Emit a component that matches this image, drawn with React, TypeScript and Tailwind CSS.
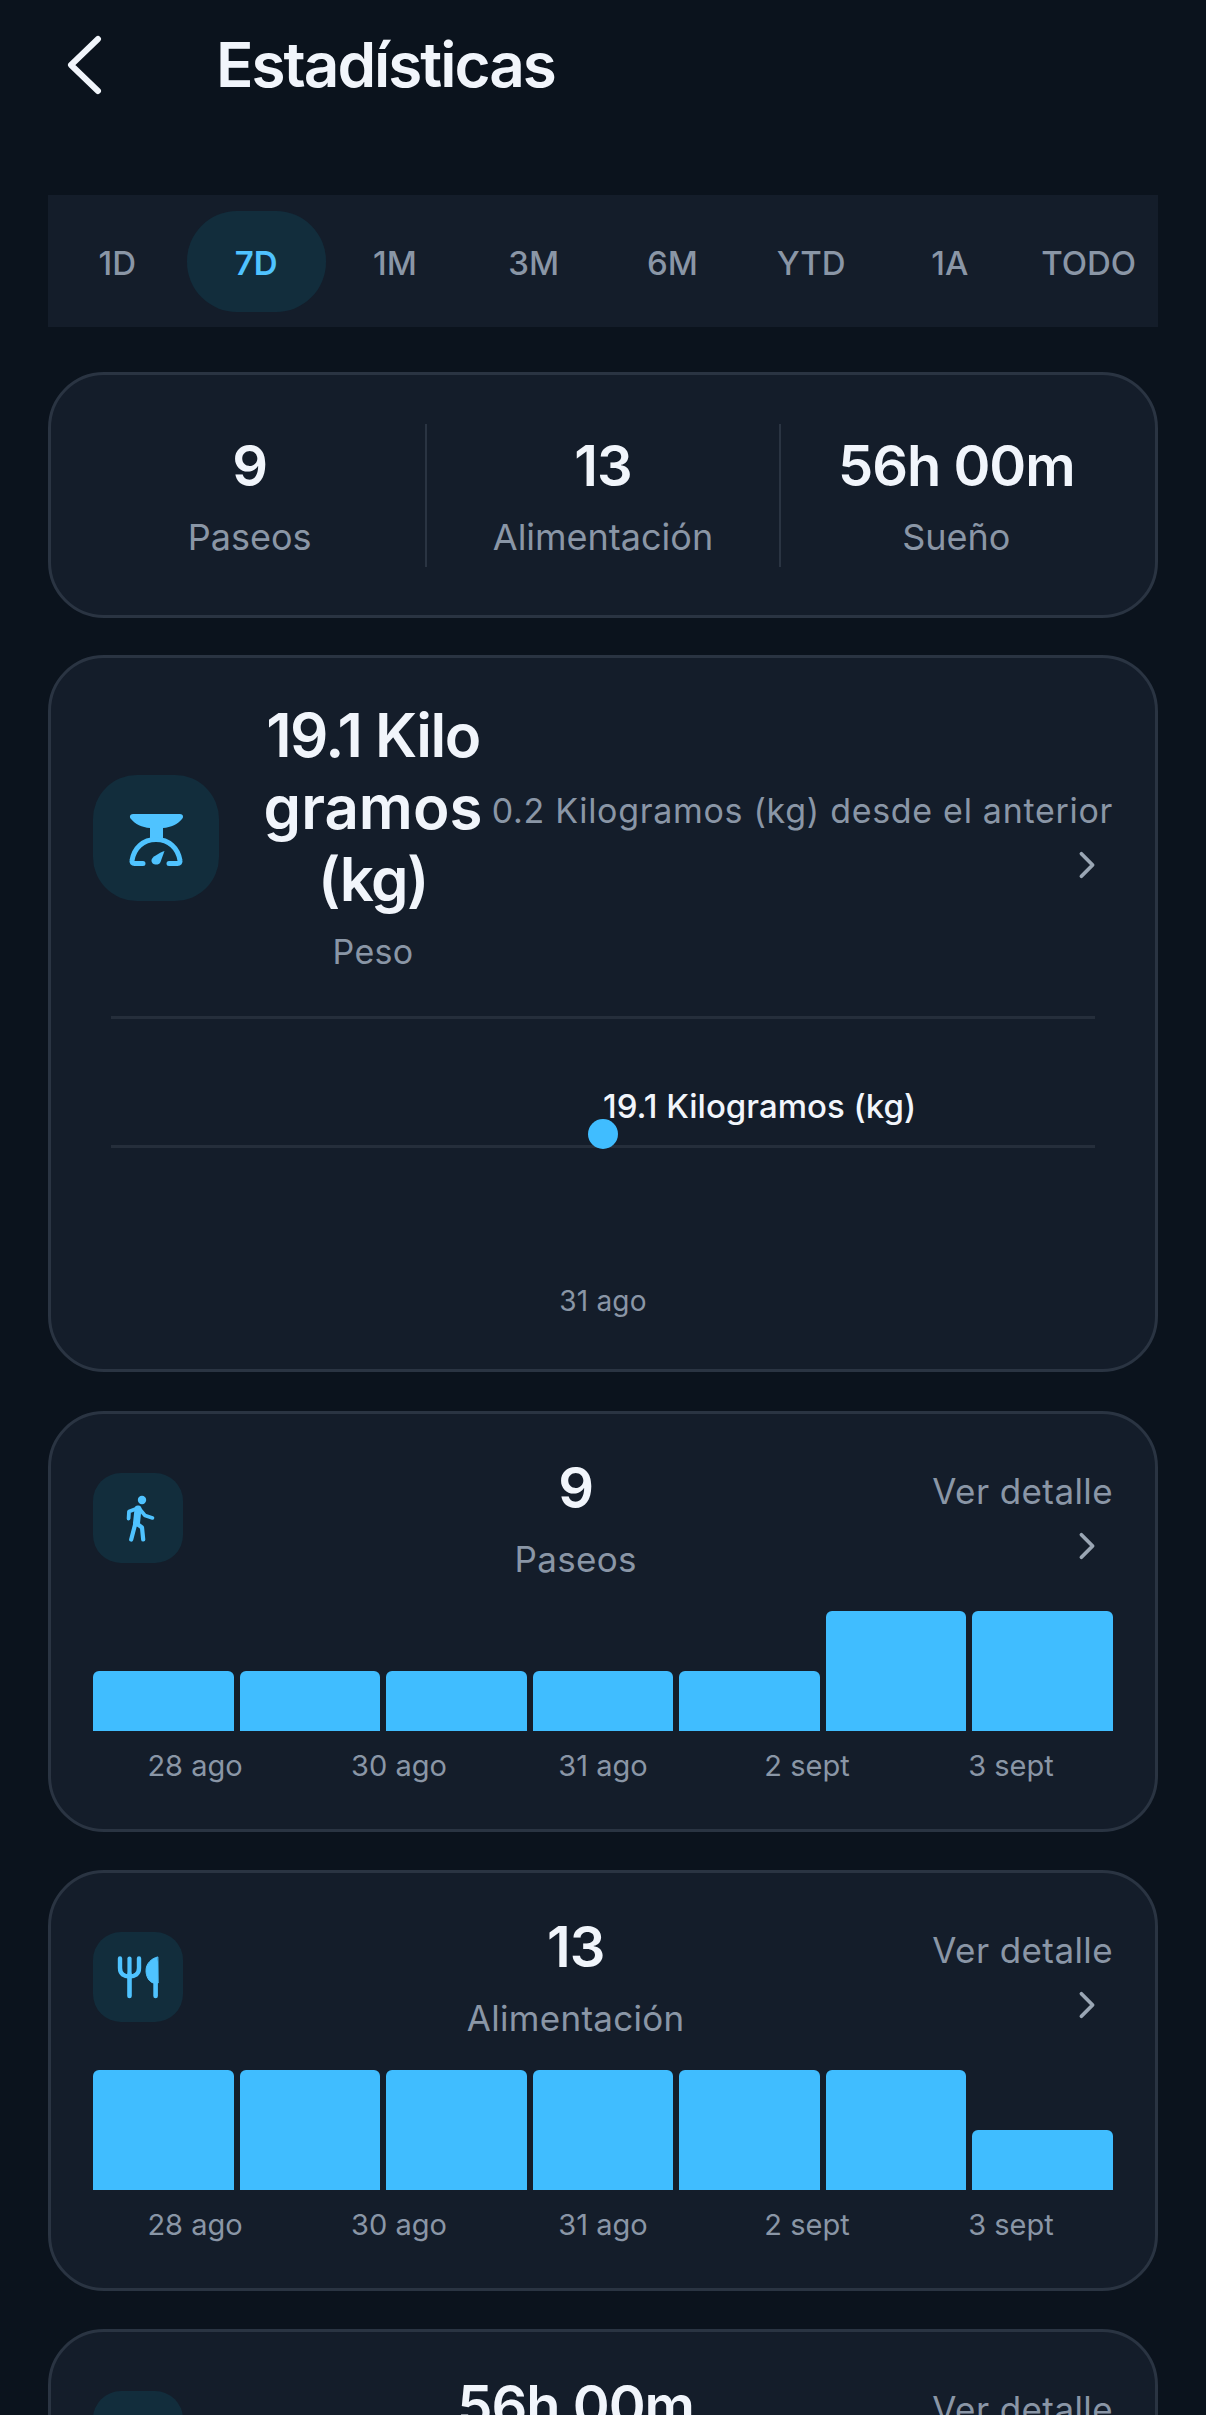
import React from "react";

const tabs = ["1D", "7D", "1M", "3M", "6M", "YTD", "1A", "TODO"];
const stats = [
  { v: "9", l: "Paseos" },
  { v: "13", l: "Alimentación" },
  { v: "56h 00m", l: "Sueño" },
];
const dates = ["28 ago", "30 ago", "31 ago", "2 sept", "3 sept"];

function Chevron({ size = 28 }: { size?: number }) {
  return (
    <svg width={size} height={size} viewBox="0 0 30 30" fill="none" stroke="#9aa6b4" strokeWidth="4" strokeLinecap="round" strokeLinejoin="round">
      <polyline points="9,3 21,15 9,27" />
    </svg>
  );
}

function WalkIcon() {
  return (
    <svg width="90" height="90" viewBox="0 0 90 90" fill="none" stroke="#4fc3ff" strokeLinecap="round" strokeLinejoin="round">
      <circle cx="49" cy="27" r="4.2" fill="#4fc3ff" stroke="none" />
      <path d="M45 36 L43.5 50" strokeWidth="7" />
      <path d="M44 35.5 L36 38.5 L35.6 45.5" strokeWidth="3.8" />
      <path d="M47 36.5 L52 42.5 L59.5 45" strokeWidth="3.6" />
      <path d="M42.5 50 L38.2 66.5" strokeWidth="4.2" />
      <path d="M43 50 L49 54.5 L50.2 66.5" strokeWidth="4.2" />
    </svg>
  );
}

function FoodIcon() {
  return (
    <svg width="90" height="90" viewBox="0 0 90 90" fill="none" stroke="#4fc3ff" strokeLinecap="round" strokeLinejoin="round">
      <path d="M27 26.5 V36 C27 42 31 44.5 36.5 44.5 C42 44.5 46 42 46 36 V26.5" strokeWidth="4.4" />
      <path d="M36.5 26.5 V39" strokeWidth="4.2" />
      <path d="M36.5 41 V64" strokeWidth="4.6" />
      <path d="M62.6 30 V64" strokeWidth="4.6" />
      <path d="M64.5 25 C58 26.5 53 32 53 38.5 C53 44.5 56 50 60.5 51 L64.8 51 Z" fill="#4fc3ff" stroke="#4fc3ff" strokeWidth="1" />
    </svg>
  );
}

function MoonIcon() {
  return (
    <svg width="90" height="90" viewBox="0 0 90 90" fill="#4fc3ff">
      <path d="M50 26 C39 27 31 35 31 46 C31 56 39 64 49 64 C56 64 62 60 65 54 C55 56 46 49 46 39 C46 34 47 30 50 26 Z" />
    </svg>
  );
}

function ScaleIcon() {
  return (
    <svg width="126" height="126" viewBox="0 0 126 126" fill="none">
      <path d="M40 39 H87 C90 39 91 42 89 44 C85 49 78 52.5 70 53 V65 H57 V53 C49 52.5 42 49 38 44 C36 42 37 39 40 39 Z" fill="#4fc3ff" />
      <path d="M50 88.5 H41.5 C39.5 88.5 38.6 87.5 39 85.5 C41 73 50 64.5 63 64.5 C76 64.5 85 73 87 85.5 C87.4 87.5 86.5 88.5 84.5 88.5 H76" stroke="#4fc3ff" strokeWidth="5" strokeLinecap="round" strokeLinejoin="round" />
      <path d="M71.5 76 L67.5 87 C66 91 58 90.5 58.5 85 C59 82 66 78 71.5 76 Z" fill="#4fc3ff" />
    </svg>
  );
}

function BarCard({ icon, value, label, bars, first }: { icon: React.ReactNode; value: string; label: string; bars: number[]; first?: boolean }) {
  return (
    <section className={first ? "mt-[39px] shrink-0 rounded-[56px] border-[3px] border-[#2a3442] bg-[#141d2a] pt-[39px] pr-[42px] pb-[43px] pl-[42px]" : "mt-[38px] shrink-0 rounded-[56px] border-[3px] border-[#2a3442] bg-[#141d2a] pt-[39px] pr-[42px] pb-[43px] pl-[42px]"}>
      <div className="flex items-start">
        <div className="mt-[20px] flex h-[90px] w-[90px] shrink-0 items-center justify-center rounded-[28px] bg-[#122d3c]">{icon}</div>
        <div className="flex-1 pl-[36px] text-center">
          <div className="h-[70px] text-[56px] leading-[70px] font-semibold tracking-[-1px] text-[#f1f5fb]">{value}</div>
          <div className="mt-[11px] h-[50px] text-[35px] leading-[50px] tracking-[0.3px] text-[#8a96a6]">{label}</div>
        </div>
        <div className="mt-[18px] flex flex-col items-end">
          <div className="text-[35px] leading-[40px] tracking-[0.4px] whitespace-nowrap text-[#8a96a6]">Ver detalle</div>
          <div className="mt-[21px] mr-[12px]"><Chevron /></div>
        </div>
      </div>
      <div className="mt-[27px] grid h-[120px] grid-cols-7 items-end gap-[6px]">
        {bars.map((h, i) => (
          <div key={i} className="rounded-t-[6px] bg-[#40bdff]" style={{ height: h }} />
        ))}
      </div>
      <div className="mt-[15px] grid grid-cols-5">
        {dates.map((d) => (
          <div key={d} className="text-center text-[29px] leading-[40px] text-[#8a96a6]">{d}</div>
        ))}
      </div>
    </section>
  );
}

export default function App() {
  return (
    <div className="flex h-[2415px] w-[1206px] flex-col overflow-hidden bg-[#0b131d] px-[48px] font-['Inter','Liberation_Sans',sans-serif]">
      <header className="relative flex h-[195px] shrink-0 items-start">
        <svg className="mt-[35px] ml-[19px]" width="36" height="60" viewBox="0 0 36 60" fill="none" stroke="#f1f5fb" strokeWidth="6" strokeLinecap="round" strokeLinejoin="round">
          <polyline points="31,4 4,30 31,56" />
        </svg>
        <h1 className="mt-[26px] ml-[113px] text-[62px] leading-[78px] font-semibold tracking-[-2px] text-[#f1f5fb]">Estadísticas</h1>
      </header>

      <nav className="grid h-[132px] shrink-0 grid-cols-8 items-center bg-[#141d2a] py-[16px]">
        {tabs.map((t) => (
          <div
            key={t}
            className={
              t === "7D"
                ? "flex h-[101px] items-center justify-center rounded-[50px] bg-[#122d3c] pt-[5px] text-[33px] font-semibold text-[#4fc3ff]"
                : "flex h-[101px] items-center justify-center pt-[5px] text-[33px] font-medium text-[#8a96a6]"
            }
          >
            {t}
          </div>
        ))}
      </nav>

      <section className="mt-[45px] flex h-[246px] shrink-0 items-center rounded-[56px] border-[3px] border-[#2a3442] bg-[#141d2a] px-[23px]">
        {stats.map((s, i) => (
          <div
            key={s.l}
            className={i < 2 ? "flex h-[143px] flex-1 flex-col items-center border-r-2 border-[#2a3442]" : "flex h-[143px] flex-1 flex-col items-center"}
          >
            <div className="mt-[7px] text-[56px] leading-[70px] font-semibold tracking-[-1px] text-[#f1f5fb]">{s.v}</div>
            <div className="mt-[11px] text-[36px] leading-[50px] text-[#8a96a6]">{s.l}</div>
          </div>
        ))}
      </section>

      <section className="mt-[37px] h-[717px] shrink-0 rounded-[56px] border-[3px] border-[#2a3442] bg-[#141d2a] pt-[42px] pr-[42px] pl-[42px]">
        <div className="flex h-[275px] items-center">
          <div className="flex h-[126px] w-[126px] shrink-0 items-center justify-center rounded-[44px] bg-[#122d3c]"><ScaleIcon /></div>
          <div className="ml-[43px] w-[222px] shrink-0 text-center">
            <div className="text-[60px] leading-[72px] font-semibold tracking-[-1.5px] text-[#f1f5fb]">
              <span className="block whitespace-nowrap">19.1 Kilo</span>
              <span className="block whitespace-nowrap tracking-[0px]">gramos</span>
              <span className="block whitespace-nowrap">(kg)</span>
            </div>
            <div className="mt-[12px] text-[34px] leading-[50px] tracking-[0.3px] text-[#8a96a6]">Peso</div>
          </div>
          <div className="flex flex-1 flex-col items-end pb-[8px]">
            <div className="text-[34px] leading-[44px] tracking-[0.7px] whitespace-nowrap text-[#8a96a6]">0.2 Kilogramos (kg) desde el anterior</div>
            <div className="mt-[18px] mr-[12px]"><Chevron /></div>
          </div>
        </div>

        <div className="relative mt-[41px] h-[300px]">
          <div className="absolute top-0 right-[18px] left-[18px] h-[3px] bg-[#252e3b]" />
          <div className="absolute top-[129px] right-[18px] left-[18px] h-[3px] bg-[#252e3b]" />
          <div className="absolute top-[103px] left-[495px] h-[30px] w-[30px] rounded-full bg-[#40bdff]" />
          <div className="absolute top-[70px] left-[510px] text-[33px] leading-[40px] font-medium whitespace-nowrap text-[#f1f5fb]">19.1 Kilogramos (kg)</div>
          <div className="absolute top-[265px] left-[460px] w-[100px] text-center text-[28px] leading-[40px] tracking-[0.2px] text-[#8a96a6]">31 ago</div>
        </div>
      </section>

      <BarCard first icon={<WalkIcon />} value="9" label="Paseos" bars={[60, 60, 60, 60, 60, 120, 120]} />
      <BarCard icon={<FoodIcon />} value="13" label="Alimentación" bars={[120, 120, 120, 120, 120, 120, 60]} />
      <BarCard icon={<MoonIcon />} value="56h 00m" label="Sueño" bars={[60, 60, 60, 60, 60, 60, 60]} />
    </div>
  );
}
